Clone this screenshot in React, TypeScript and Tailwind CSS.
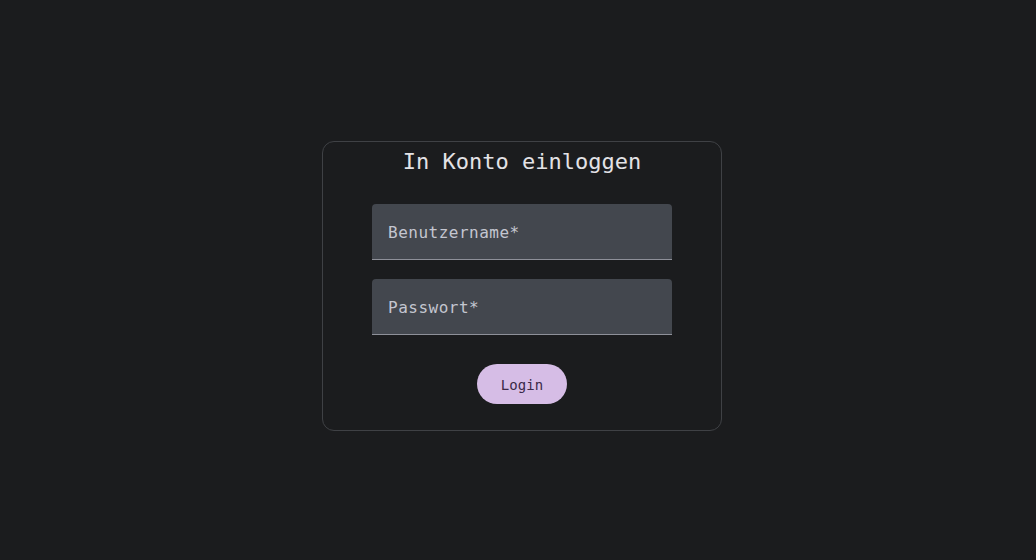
export default function App() {
  return (
    <div
      className="flex h-[560px] w-full items-center justify-center bg-[#1b1c1e] pl-2 pt-3"
      style={{ fontFamily: '"DejaVu Sans Mono", "Liberation Mono", monospace' }}
    >
      <div className="flex w-[400px] flex-col items-center rounded-xl border border-[#3f4145] px-[49px] pt-[6px] pb-[26px]">
        <h1 className="h-[28px] text-[22px] leading-[28px] text-[#e3e2e6]">In Konto einloggen</h1>

        <div className="mt-[28px] flex h-14 w-[300px] items-center rounded-t border-b border-[#8e9099] bg-[#43474e] px-4 pt-[3px]">
          <span className="text-base tracking-[0.5px] text-[#c4c6d0]">Benutzername*</span>
        </div>

        <div className="mt-[19px] flex h-14 w-[300px] items-center rounded-t border-b border-[#8e9099] bg-[#43474e] px-4 pt-[3px]">
          <span className="text-base tracking-[0.5px] text-[#c4c6d0]">Passwort*</span>
        </div>

        <button className="mt-[29px] h-10 rounded-full bg-[#d6bde6] px-6 pt-[2px] text-sm tracking-[0.1px] text-[#3b2948]">
          Login
        </button>
      </div>
    </div>
  )
}
